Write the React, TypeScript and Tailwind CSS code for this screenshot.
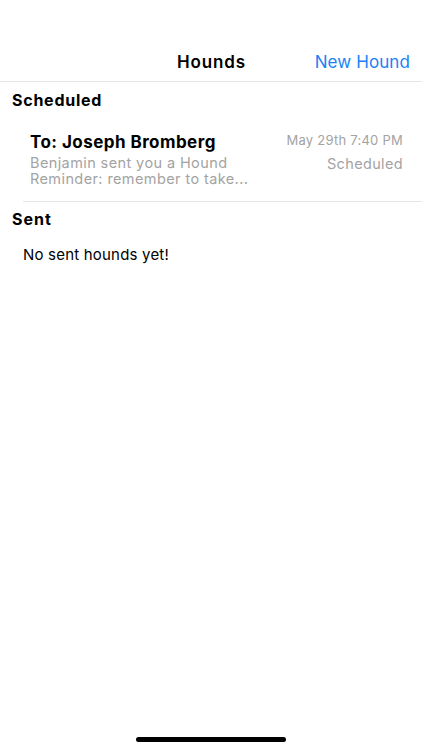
import React from "react";

export default function App() {
  const font = { fontFamily: "Inter, 'Liberation Sans', sans-serif" };
  return (
    <div className="relative w-[422px] h-[750px] bg-white overflow-hidden text-black" style={font}>
      {/* Nav bar */}
      <div className="h-[82px] border-b border-[#e6e6e6] flex items-end pb-[6px]">
        <div className="relative w-full h-[24px] flex items-center justify-center">
          <span className="text-[17px] font-semibold tracking-[0.9px] pl-[1px]">Hounds</span>
          <span className="absolute right-[12px] text-[17px] tracking-[0.1px] text-[#1a82f7]">New Hound</span>
        </div>
      </div>

      {/* Scheduled header */}
      <div className="h-[36px] flex items-center px-[12px]">
        <span className="text-[16px] font-bold tracking-[0.75px]">Scheduled</span>
      </div>

      {/* Row */}
      <div className="pl-[23px]">
        <div className="border-b border-[#e6e6e6] pt-[13px] pb-[14px] pl-[7px] pr-[19px] flex justify-between">
          <div className="flex flex-col">
            <span className="text-[17px] font-bold leading-[22px] tracking-[0.45px]">To: Joseph Bromberg</span>
            <span className="text-[14.5px] leading-[16px] text-[#a3a3a3] mt-[2px] tracking-[0.4px]">Benjamin sent you a Hound</span>
            <span className="text-[14.5px] leading-[16px] text-[#a3a3a3] tracking-[0.4px]">Reminder: remember to take...</span>
          </div>
          <div className="flex flex-col items-end">
            <span className="text-[13px] leading-[18px] text-[#a3a3a3] tracking-[0.25px]">May 29th 7:40 PM</span>
            <span className="text-[14.5px] leading-[20px] text-[#a3a3a3] mt-[5px] tracking-[0.35px]">Scheduled</span>
          </div>
        </div>
      </div>

      {/* Sent header */}
      <div className="h-[34px] flex items-center px-[12px]">
        <span className="text-[16px] font-bold tracking-[1px]">Sent</span>
      </div>

      <div className="pl-[23px] pt-[6px]">
        <span className="text-[15px] tracking-[0.2px]">No sent hounds yet!</span>
      </div>

      {/* Home indicator */}
      <div className="absolute bottom-[8px] left-0 right-0 flex justify-center">
        <div className="w-[150px] h-[5px] rounded-full bg-black" />
      </div>
    </div>
  );
}
